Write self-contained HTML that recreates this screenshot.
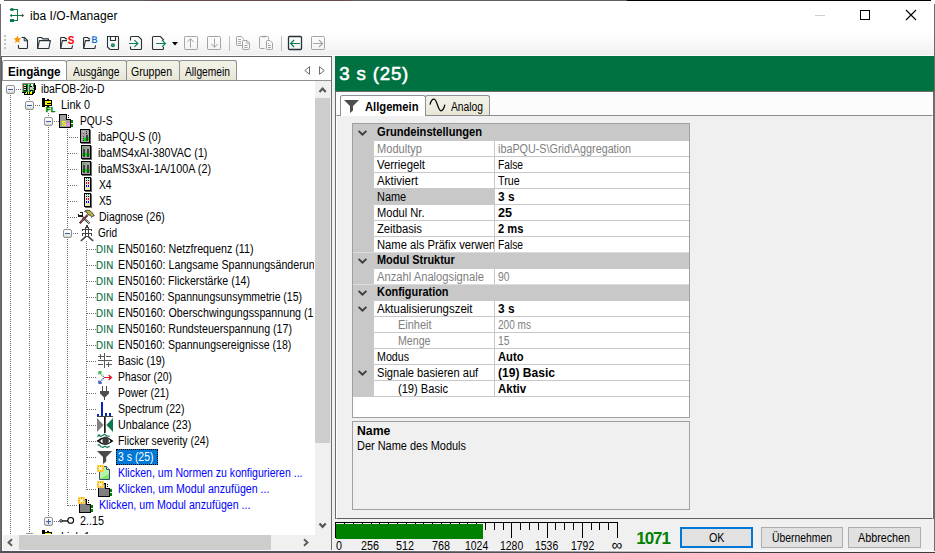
<!DOCTYPE html>
<html lang="de"><head><meta charset="utf-8"><title>iba I/O-Manager</title>
<style>
html,body{margin:0;padding:0}
body{width:935px;height:553px;overflow:hidden;position:relative;background:#f0f0f0;font:11px/16px "Liberation Sans",sans-serif;color:#000}
div,span,svg{position:absolute;box-sizing:border-box}
svg{overflow:visible}
.t{white-space:pre}
.sx{transform-origin:0 0}
.ce{shape-rendering:crispEdges}
.din{color:#006b3f;transform:scaleX(.88);transform-origin:0 0;letter-spacing:.35px;-webkit-text-stroke:.12px #006b3f}
#titlebar{left:0;top:0;width:935px;height:31px;background:#fff}
#toolbar{left:1px;top:31px;width:933px;height:25px;background:linear-gradient(#ffffff 0%,#fafafa 38%,#efefef 100%)}
#left{left:1px;top:56px;width:331px;height:497px;background:#fff;border-top:1px solid #646464;border-right:1px solid #6f6f6f;border-left:1px solid #5e5e5e}
.vl{width:1px;background-image:linear-gradient(#6c6c6c 50%,transparent 50%);background-size:1px 2px}
.hl{height:1px;background-image:linear-gradient(90deg,#6c6c6c 50%,transparent 50%);background-size:2px 1px}
.ex{width:9px;height:9px;border:1px solid #919191;border-radius:2px;background:linear-gradient(#fff 0%,#f2f2f2 50%,#d8d8d8 100%)}
.ex i{position:absolute;left:1px;top:3px;width:5px;height:1px;background:#3f5fae;display:block}
.ex b{position:absolute;left:3px;top:1px;width:1px;height:5px;background:#3f5fae;display:block}
.tab{top:60px;height:20px;border:1px solid #8e9192;border-bottom:none;border-radius:2.5px 2.5px 0 0;background:linear-gradient(#f3f2e8 0%,#eeede0 55%,#e7e5d4 100%)}
.tabsel{top:60px;height:20px;border:1px solid #8e9192;border-bottom:none;border-radius:2.5px 2.5px 0 0;background:#fff}
.btn{top:527px;height:21px;background:#e1e1e1;border:1px solid #adadad}

</style></head>
<body>
<div id="titlebar"></div>
<div style="left:4px;top:0;width:927px;height:1px;background:linear-gradient(90deg,#5e5e5e 0,#5e5e5e 140px,#6a4a4a 150px,#6a4a4a 340px,#5e5e5e 350px,#5e5e5e 622px,#000 624px,#000 100%)"></div>
<svg style="left:9px;top:7px" width="16" height="16" viewBox="0 0 16 16"><g fill="#0b7a4b"><ellipse cx="3" cy="2.45" rx="2.05" ry="1.5"/><rect x="4.5" y="2" width="4.5" height="1"/><rect x="8" y="2" width="1" height="12"/><rect x="2" y="8" width="10.5" height="1"/><path d="M0.8 8.5L2.4 6.9L4 8.5L2.4 10.1Z"/><rect x="1" y="12" width="4" height="3"/><rect x="5" y="13" width="4" height="1"/></g><path d="M12 8.5L13.5 7L15 8.5L13.5 10Z" fill="#36423e"/></svg>
<span class="t" style="left:30px;top:8px;font-size:12px;letter-spacing:0.056px;">iba I/O-Manager</span>
<div style="left:815px;top:15px;width:10px;height:1px;background:#cfcfcf"></div>
<div style="left:860px;top:10px;width:10px;height:10px;border:1px solid #000"></div>
<svg style="left:906px;top:10px" width="10" height="10" viewBox="0 0 10 10"><path d="M0 0L10 10M10 0L0 10" stroke="#000" stroke-width="1.1" fill="none"/></svg>
<div id="toolbar"></div>
<div style="left:4px;top:35px;width:2px;height:2px;background:#c3c3c3"></div>
<div style="left:4px;top:39px;width:2px;height:2px;background:#c3c3c3"></div>
<div style="left:4px;top:43px;width:2px;height:2px;background:#c3c3c3"></div>
<div style="left:4px;top:47px;width:2px;height:2px;background:#c3c3c3"></div>
<svg style="left:13px;top:35px" width="16" height="16" viewBox="0 0 16 16"><path d="M8.5 2.5H11.5L14.5 5.5V12.5Q14.5 13.5 13.5 13.5H6.5Q5.5 13.5 5.5 12.5V10" fill="none" stroke="#263238" stroke-width="1.1"/><path d="M11.2 2.8V5.8H14.3" fill="none" stroke="#263238" stroke-width="1"/><path d="M4.4 0.6L5.5 3.1L8.2 3.4L6.2 5.2L6.8 7.9L4.4 6.5L2 7.9L2.6 5.2L0.6 3.4L3.3 3.1Z" fill="#f7960e"/></svg>
<svg style="left:36px;top:35px" width="16" height="16" viewBox="0 0 16 16"><path d="M1.6 13.5V3.2Q1.6 2.5 2.3 2.5H5.6L7 3.9H12.4V5.6" fill="none" stroke="#263238" stroke-width="1.1"/><path d="M1.7 13.5L3.4 5.6H14.4L12.8 13.5Z" fill="none" stroke="#263238" stroke-width="1.1" stroke-linejoin="round"/></svg>
<svg style="left:59px;top:35px" width="16" height="16" viewBox="0 0 16 16"><path d="M1.6 13.5V3.2Q1.6 2.5 2.3 2.5H5.6L7 3.9H8.2" fill="none" stroke="#263238" stroke-width="1.1"/><path d="M13.6 10.4L12.8 13.5H1.7L3.4 5.6H8" fill="none" stroke="#263238" stroke-width="1.1" stroke-linejoin="round"/><text transform="translate(8.8,9.1) scale(0.9,1)" font-family="Liberation Sans, sans-serif" font-weight="700" font-size="11" fill="#ff0000">S</text></svg>
<svg style="left:82px;top:35px" width="16" height="16" viewBox="0 0 16 16"><path d="M1.6 13.5V3.2Q1.6 2.5 2.3 2.5H5.6L7 3.9H8.2" fill="none" stroke="#263238" stroke-width="1.1"/><path d="M13.6 10.4L12.8 13.5H1.7L3.4 5.6H8" fill="none" stroke="#263238" stroke-width="1.1" stroke-linejoin="round"/><text transform="translate(9.5,8) scale(0.86,1)" text-rendering="geometricPrecision" font-family="Liberation Sans, sans-serif" font-weight="700" font-size="9.8" fill="#1673d6">B</text></svg>
<svg style="left:105px;top:35px" width="16" height="16" viewBox="0 0 16 16"><path d="M2.5 1.5H13Q13.5 1.5 13.5 2V14Q13.5 14.5 13 14.5H5L2.5 12Z" fill="none" stroke="#263238" stroke-width="1.1"/><path d="M5.5 1.5V5.5H10.5V1.5" fill="none" stroke="#263238" stroke-width="1.1"/><circle cx="7.9" cy="10.2" r="2" fill="#0f7f52"/><circle cx="7.9" cy="10.2" r="0.8" fill="#5fae8a"/></svg>
<svg style="left:128px;top:35px" width="16" height="16" viewBox="0 0 16 16"><path d="M2.5 5.6V2.5Q2.5 1.5 3.5 1.5H10.5L13.5 4.5V13.5Q13.5 14.5 12.5 14.5H3.5Q2.5 14.5 2.5 13.5V11.4" fill="none" stroke="#263238" stroke-width="1.1"/><path d="M1 8.5H9.6M6.4 5.1L9.8 8.5L6.4 11.9" fill="none" stroke="#0f7f52" stroke-width="1.2"/></svg>
<svg style="left:151px;top:35px" width="16" height="16" viewBox="0 0 16 16"><path d="M12.5 5.4V4.8L9.4 1.5H2.5Q1.5 1.5 1.5 2.5V13.5Q1.5 14.5 2.5 14.5H11.5Q12.5 14.5 12.5 13.5V11.8" fill="none" stroke="#263238" stroke-width="1.1"/><path d="M5.2 8.5H14.2M11 5.1L14.4 8.5L11 11.9" fill="none" stroke="#0f7f52" stroke-width="1.2"/></svg>
<svg style="left:171.6px;top:41.7px" width="6" height="3.6" viewBox="0 0 6 3.6"><path d="M0 0H6L3 3.6Z" fill="#000"/></svg>
<svg style="left:183px;top:35px" width="16" height="16" viewBox="0 0 16 16"><rect x="1.5" y="1.5" width="13" height="13" rx="0.8" fill="none" stroke="#a4a4a4" stroke-width="1"/><path d="M7.5 12.6V3.6M4.2 7.2L7.5 3.7L10.8 7.2" fill="none" stroke="#a4a4a4" stroke-width="1"/></svg>
<svg style="left:206px;top:35px" width="16" height="16" viewBox="0 0 16 16"><rect x="1.5" y="1.5" width="13" height="13" rx="0.8" fill="none" stroke="#a4a4a4" stroke-width="1"/><path d="M8.5 3.4V12.4M5.2 8.8L8.5 12.3L11.8 8.8" fill="none" stroke="#a4a4a4" stroke-width="1"/></svg>
<div style="left:229px;top:36px;width:1px;height:15px;background:#bdbdbd"></div>
<svg style="left:235px;top:35px" width="16" height="16" viewBox="0 0 16 16"><path d="M7 10.5H2.2Q1.5 10.5 1.5 9.8V2.2Q1.5 1.5 2.2 1.5H6.4L8.5 3.6V4.6" fill="none" stroke="#a4a4a4" stroke-width="1"/><path d="M7.5 6.2Q7.5 5.5 8.2 5.5H12L14.5 8V13.8Q14.5 14.5 13.8 14.5H8.2Q7.5 14.5 7.5 13.8Z" fill="none" stroke="#a4a4a4" stroke-width="1"/><path d="M11.8 5.8V8.2H14.2" fill="none" stroke="#a4a4a4" stroke-width="0.9"/><path d="M3.2 4.5H6M3.2 6.5H6M3.2 8.5H6M9.4 10.5H12.6M9.4 12.5H12.6" stroke="#a4a4a4" stroke-width="1" fill="none"/></svg>
<svg style="left:258px;top:35px" width="16" height="16" viewBox="0 0 16 16"><path d="M6.6 13.5H2.5Q1.5 13.5 1.5 12.5V2.5Q1.5 1.5 2.5 1.5H9.5Q10.5 1.5 10.5 2.5V4.6" fill="none" stroke="#a4a4a4" stroke-width="1"/><path d="M4.4 1.6H7.8" stroke="#a4a4a4" stroke-width="1.6"/><path d="M8.5 6.2Q8.5 5.5 9.2 5.5H12L14.5 8V13.8Q14.5 14.5 13.8 14.5H9.2Q8.5 14.5 8.5 13.8Z" fill="none" stroke="#a4a4a4" stroke-width="1"/><path d="M10 8.5H11.2M10 10.5H13M10 12.5H13" stroke="#a4a4a4" stroke-width="1"/></svg>
<div style="left:281px;top:36px;width:1px;height:15px;background:#bdbdbd"></div>
<svg style="left:287px;top:35px" width="16" height="16" viewBox="0 0 16 16"><rect x="1.5" y="1.5" width="13" height="13" rx="1" fill="none" stroke="#263238" stroke-width="1.3"/><path d="M12.9 8.5H3.8M7.1 5L3.6 8.5L7.1 12" fill="none" stroke="#0f7f52" stroke-width="1.2"/></svg>
<svg style="left:310px;top:35px" width="16" height="16" viewBox="0 0 16 16"><rect x="1.5" y="1.5" width="13" height="13" rx="0.8" fill="none" stroke="#a4a4a4" stroke-width="1"/><path d="M3.2 8.5H12.4M9 5L12.6 8.5L9 12" fill="none" stroke="#a4a4a4" stroke-width="1.1"/></svg>
<div style="left:0;top:4px;width:1px;height:549px;background:#6e6e6e"></div>
<div id="left"></div>
<div style="left:2px;top:80px;width:329px;height:1px;background:#8e9192"></div>
<div class="tab" style="left:66px;width:61px"></div>
<div class="tab" style="left:126px;width:54px"></div>
<div class="tab" style="left:179px;width:58px"></div>
<div class="tabsel" style="left:2px;width:65px"></div>
<span class="t sx" style="left:7.5px;top:64px;font-size:12px;font-weight:700;transform:scaleX(0.9719);">Eingänge</span>
<span class="t sx" style="left:72.5px;top:64px;font-size:12px;transform:scaleX(0.8604);">Ausgänge</span>
<span class="t sx" style="left:131px;top:64px;font-size:12px;transform:scaleX(0.8779);">Gruppen</span>
<span class="t sx" style="left:185px;top:64px;font-size:12px;transform:scaleX(0.8538);">Allgemein</span>
<svg style="left:303.5px;top:66px" width="6" height="9" viewBox="0 0 6 9"><path d="M5.5 0.7V8.3L0.8 4.5Z" fill="none" stroke="#6d6d6d" stroke-width="1"/></svg>
<svg style="left:319px;top:66px" width="6" height="9" viewBox="0 0 6 9"><path d="M0.5 0.7V8.3L5.2 4.5Z" fill="none" stroke="#6d6d6d" stroke-width="1"/></svg>
<div style="left:315px;top:81px;width:16px;height:455px;background:#f0f0f0"></div>
<div style="left:315px;top:98px;width:15px;height:345px;background:#cdcdcd"></div>
<svg style="left:318px;top:86px" width="9" height="7" viewBox="0 0 9 7"><path d="M1.5 6L4.6 2.6L7.7 6" fill="none" stroke="#575757" stroke-width="2.2"/></svg>
<svg style="left:318px;top:522px" width="9" height="7" viewBox="0 0 9 7"><path d="M1.5 1.4L4.6 4.8L7.7 1.4" fill="none" stroke="#575757" stroke-width="2.2"/></svg>
<div style="left:3px;top:535px;width:328px;height:15px;background:#f0f0f0"></div>
<div style="left:19px;top:535px;width:252px;height:15px;background:#cdcdcd"></div>
<svg style="left:7px;top:539px" width="6" height="7" viewBox="0 0 6 7"><path d="M5 0.3L1.5 3.5L5 6.7" fill="none" stroke="#5a5a5a" stroke-width="1.9"/></svg>
<svg style="left:303px;top:539px" width="6" height="7" viewBox="0 0 6 7"><path d="M1 0.3L4.5 3.5L1 6.7" fill="none" stroke="#5a5a5a" stroke-width="1.9"/></svg>
<div id="treeclip" style="left:2px;top:81px;width:312px;height:453px;overflow:hidden"><div style="left:-2px;top:-81px;width:935px;height:553px"><div class="vl" style="left:10px;top:95px;height:441px"></div>
<div class="vl" style="left:29px;top:97px;height:439px"></div>
<div class="vl" style="left:48px;top:113px;height:404px"></div>
<div class="vl" style="left:67px;top:129px;height:377px"></div>
<div class="vl" style="left:86px;top:241px;height:249px"></div>
<div class="hl" style="left:16px;top:89px;width:5px"></div>
<div class="hl" style="left:35px;top:105px;width:5px"></div>
<div class="hl" style="left:54px;top:121px;width:5px"></div>
<div class="hl" style="left:69px;top:137px;width:9px"></div>
<div class="hl" style="left:68px;top:153px;width:9px"></div>
<div class="hl" style="left:68px;top:169px;width:9px"></div>
<div class="hl" style="left:68px;top:185px;width:9px"></div>
<div class="hl" style="left:68px;top:201px;width:9px"></div>
<div class="hl" style="left:68px;top:217px;width:9px"></div>
<div class="hl" style="left:73px;top:233px;width:5px"></div>
<div class="hl" style="left:87px;top:249px;width:9px"></div>
<div class="hl" style="left:87px;top:265px;width:9px"></div>
<div class="hl" style="left:87px;top:281px;width:9px"></div>
<div class="hl" style="left:87px;top:297px;width:9px"></div>
<div class="hl" style="left:87px;top:313px;width:9px"></div>
<div class="hl" style="left:87px;top:329px;width:9px"></div>
<div class="hl" style="left:87px;top:345px;width:9px"></div>
<div class="hl" style="left:87px;top:361px;width:9px"></div>
<div class="hl" style="left:87px;top:377px;width:9px"></div>
<div class="hl" style="left:87px;top:393px;width:9px"></div>
<div class="hl" style="left:87px;top:409px;width:9px"></div>
<div class="hl" style="left:87px;top:425px;width:9px"></div>
<div class="hl" style="left:87px;top:441px;width:9px"></div>
<div class="hl" style="left:87px;top:457px;width:9px"></div>
<div class="hl" style="left:87px;top:473px;width:9px"></div>
<div class="hl" style="left:87px;top:489px;width:9px"></div>
<div class="hl" style="left:68px;top:505px;width:9px"></div>
<div class="hl" style="left:54px;top:521px;width:5px"></div>
<div class="hl" style="left:35px;top:537px;width:5px"></div>
<div class="ex" style="left:6px;top:85px"><i></i></div>
<svg class="ce" style="left:21px;top:81px" width="16" height="16" viewBox="0 0 16 16"><rect x="1" y="2" width="13" height="1" fill="#8c8c8c"/><rect x="1" y="3" width="1" height="8" fill="#a8a8a8"/><rect x="2" y="3" width="11" height="8" fill="#0a8a14"/><rect x="13" y="2" width="1" height="10" fill="#000"/><rect x="14" y="4" width="1" height="5" fill="#000"/><rect x="1" y="11" width="13" height="1" fill="#000"/><rect x="3" y="12" width="10" height="1" fill="#000"/><rect x="3" y="13" width="9" height="1" fill="#000"/><rect x="4" y="12" width="1" height="1" fill="#e8e8e8"/><rect x="5" y="11" width="1" height="2" fill="#ffff00"/><rect x="7" y="11" width="1" height="2" fill="#ffff00"/><rect x="9" y="11" width="2" height="2" fill="#ffff00"/><rect x="2" y="4" width="1" height="1" fill="#ff0000"/><rect x="2" y="6" width="1" height="1" fill="#ff0000"/><rect x="3" y="4" width="2" height="1" fill="#e6e6e6"/><rect x="3" y="6" width="2" height="1" fill="#e6e6e6"/><rect x="3" y="8" width="2" height="1" fill="#e6e6e6"/><rect x="3" y="5" width="3" height="1" fill="#000"/><rect x="3" y="7" width="3" height="1" fill="#000"/><rect x="3" y="9" width="3" height="1" fill="#000"/><rect x="5" y="4" width="1" height="6" fill="#000"/><rect x="7" y="3" width="1" height="8" fill="#c0c0c0"/><rect x="8" y="3" width="1" height="1" fill="#00ff00"/><rect x="10" y="3" width="2" height="2" fill="#ffffff"/><rect x="9" y="5" width="4" height="4" fill="#c8c8c8"/><rect x="9" y="5" width="2" height="1" fill="#000"/><rect x="9" y="9" width="3" height="1" fill="#000"/><rect x="12" y="5" width="1" height="1" fill="#0a8a14"/><rect x="12" y="7" width="1" height="1" fill="#0a8a14"/><rect x="10" y="10" width="1" height="1" fill="#fff"/></svg>
<span class="t sx" style="left:41px;top:81px;font-size:12px;transform:scaleX(0.8656);">ibaFOB-2io-D</span>
<div class="ex" style="left:25px;top:101px"><i></i></div>
<svg style="left:40px;top:97px" width="16" height="16" viewBox="0 0 16 16"><g class="ce"><rect x="2" y="1" width="3" height="9" fill="#000"/><rect x="5" y="3" width="7" height="6" fill="#000"/><rect x="5" y="4" width="6" height="4" fill="#f5ee00"/><rect x="7" y="5.5" width="5" height="1" fill="#000"/><rect x="7" y="2" width="2" height="1" fill="#000"/><rect x="7" y="9" width="2" height="1" fill="#000"/></g><text x="5.7" y="15.1" font-family="Liberation Sans, sans-serif" font-weight="700" font-size="7" fill="#008000" stroke="#008000" stroke-width="0.5" letter-spacing="0.7">FL</text></svg>
<span class="t sx" style="left:61px;top:97px;font-size:12px;transform:scaleX(0.9054);">Link 0</span>
<div class="ex" style="left:44px;top:117px"><i></i></div>
<svg style="left:59px;top:113px" width="16" height="16" viewBox="0 0 16 16"><g class="ce"><path d="M0.5 1.5H7.5V6.5H11.5V14.5H0.5Z" fill="#a0a0a0" stroke="#000" stroke-width="1"/><rect x="12" y="7" width="2" height="3" fill="#008000"/><rect x="12" y="11" width="2" height="3" fill="#008000"/><rect x="9" y="2" width="1" height="1" fill="#000"/><rect x="9" y="4" width="1" height="1" fill="#000"/></g><g class="ce"><rect x="8" y="10" width="3" height="3" fill="#ff80ff"/></g><text x="2.2" y="13.1" font-family="Liberation Sans, sans-serif" font-weight="700" font-size="7.5" fill="#ffff00">S</text></svg>
<span class="t sx" style="left:80px;top:113px;font-size:12px;transform:scaleX(0.8549);">PQU-S</span>
<svg class="ce" style="left:78px;top:129px" width="16" height="16" viewBox="0 0 16 16"><rect x="3" y="1" width="10" height="14" fill="#6a6a6a"/><rect x="2" y="0" width="10" height="14" fill="#000"/><rect x="3" y="1" width="8" height="12" fill="#a6a6a6"/><rect x="5" y="2" width="1" height="1" fill="#d8d8d8"/><rect x="8" y="2" width="1" height="1" fill="#404040"/><rect x="5" y="4" width="1" height="1" fill="#ff0000"/><rect x="8" y="4" width="1" height="1" fill="#000"/><rect x="8" y="6" width="2" height="6" fill="#404040"/><rect x="5" y="7" width="1" height="1" fill="#404040"/><rect x="5" y="9" width="1" height="1" fill="#404040"/><rect x="5" y="10" width="3" height="2" fill="#00e000"/><rect x="6" y="9" width="2" height="1" fill="#00e000"/><rect x="7" y="8" width="1" height="1" fill="#00e000"/><rect x="10" y="8" width="1" height="3" fill="#00e000"/><rect x="5" y="11" width="1" height="1" fill="#404040"/></svg>
<span class="t sx" style="left:98px;top:129px;font-size:12px;transform:scaleX(0.8746);">ibaPQU-S (0)</span>
<svg class="ce" style="left:78px;top:145px" width="16" height="16" viewBox="0 0 16 16"><rect x="4" y="1" width="10" height="14" fill="#6a6a6a"/><rect x="3" y="0" width="10" height="14" fill="#000"/><rect x="4" y="1" width="8" height="12" fill="#a0a0a0"/><rect x="5" y="2" width="2" height="1" fill="#00e000"/><rect x="4" y="8" width="8" height="3" fill="#00e000"/><rect x="5" y="4" width="2" height="8" fill="#404040"/><rect x="9" y="4" width="2" height="8" fill="#404040"/></svg>
<span class="t sx" style="left:98px;top:145px;font-size:12px;transform:scaleX(0.8827);">ibaMS4xAI-380VAC (1)</span>
<svg class="ce" style="left:78px;top:161px" width="16" height="16" viewBox="0 0 16 16"><rect x="4" y="1" width="10" height="14" fill="#6a6a6a"/><rect x="3" y="0" width="10" height="14" fill="#000"/><rect x="4" y="1" width="8" height="12" fill="#a0a0a0"/><rect x="5" y="2" width="2" height="1" fill="#00e000"/><rect x="4" y="8" width="8" height="3" fill="#00e000"/><rect x="5" y="4" width="2" height="8" fill="#404040"/><rect x="9" y="4" width="2" height="8" fill="#404040"/></svg>
<span class="t sx" style="left:98px;top:161px;font-size:12px;transform:scaleX(0.9011);">ibaMS3xAI-1A/100A (2)</span>
<svg class="ce" style="left:78px;top:177px" width="16" height="16" viewBox="0 0 16 16"><rect x="7" y="1" width="7" height="14" fill="#6a6a6a"/><rect x="6" y="0" width="7" height="14" fill="#000"/><rect x="7" y="1" width="5" height="12" fill="#e4e4e4"/><rect x="8" y="1" width="1" height="1" fill="#008000"/><rect x="10" y="1" width="1" height="1" fill="#008000"/><rect x="8" y="3" width="1" height="1" fill="#000"/><rect x="10" y="3" width="1" height="1" fill="#000"/><rect x="8" y="5" width="1" height="2" fill="#ff0000"/><rect x="10" y="5" width="1" height="2" fill="#ff0000"/><rect x="8" y="8" width="1" height="2" fill="#0000ff"/><rect x="10" y="8" width="1" height="2" fill="#0000ff"/><rect x="8" y="11" width="1" height="1" fill="#ffff00"/><rect x="10" y="11" width="1" height="1" fill="#ffff00"/></svg>
<span class="t sx" style="left:99px;top:177px;font-size:12px;transform:scaleX(0.8579);">X4</span>
<svg class="ce" style="left:78px;top:193px" width="16" height="16" viewBox="0 0 16 16"><rect x="7" y="1" width="7" height="14" fill="#6a6a6a"/><rect x="6" y="0" width="7" height="14" fill="#000"/><rect x="7" y="1" width="5" height="12" fill="#e4e4e4"/><rect x="8" y="1" width="1" height="1" fill="#008000"/><rect x="10" y="1" width="1" height="1" fill="#008000"/><rect x="8" y="3" width="1" height="1" fill="#000"/><rect x="10" y="3" width="1" height="1" fill="#000"/><rect x="8" y="5" width="1" height="2" fill="#ff0000"/><rect x="10" y="5" width="1" height="2" fill="#ff0000"/><rect x="8" y="8" width="1" height="2" fill="#0000ff"/><rect x="10" y="8" width="1" height="2" fill="#0000ff"/><rect x="8" y="11" width="1" height="1" fill="#ffff00"/><rect x="10" y="11" width="1" height="1" fill="#ffff00"/></svg>
<span class="t sx" style="left:99px;top:193px;font-size:12px;transform:scaleX(0.8579);">X5</span>
<svg style="left:78px;top:209px" width="16" height="16" viewBox="0 0 16 16"><path d="M4.6 8.2L11.6 14.5" stroke="#2e2e2e" stroke-width="2.1" fill="none"/><path d="M4.6 8.2L11.6 14.5" stroke="#fff" stroke-width="1.1" stroke-dasharray="0.75 0.75" fill="none"/><path d="M9.6 6L1.7 14.2" stroke="#2a2a2a" stroke-width="2.1" fill="none"/><path d="M9.4 6.2L2 13.9" stroke="#e25555" stroke-width="1.1" stroke-dasharray="1.1 0.6" fill="none"/><path d="M6.5 2.5L8 1.3H11L13 2.5L14.5 4L15 5.5L16.4 6.5L15 7.2L14 8.3L13 7.5L12.5 6.3L10.5 6L9.5 4.5L8.5 3Z" fill="#bdb53e" stroke="#26263a" stroke-width="0.8" stroke-linejoin="round"/><g class="ce" fill="#1e1e1e"><rect x="2" y="3" width="3" height="1"/><rect x="4" y="3" width="1" height="4"/><rect x="0" y="6" width="5" height="2"/><rect x="0" y="5" width="1" height="2"/></g></svg>
<span class="t sx" style="left:99px;top:209px;font-size:12px;transform:scaleX(0.8716);">Diagnose (26)</span>
<div class="ex" style="left:63px;top:229px"><i></i></div>
<svg style="left:78px;top:225px" width="16" height="16" viewBox="0 0 16 16"><g class="ce"><rect x="8" y="0" width="2" height="2" fill="#404040"/><rect x="7" y="2" width="4" height="1" fill="#404040"/><rect x="7" y="2" width="1" height="10" fill="#404040"/><rect x="10" y="2" width="1" height="10" fill="#404040"/><rect x="4" y="4" width="10" height="1" fill="#404040"/><rect x="4" y="5" width="1" height="1" fill="#404040"/><rect x="13" y="5" width="1" height="1" fill="#404040"/><rect x="4" y="8" width="10" height="1" fill="#404040"/><rect x="4" y="9" width="1" height="2" fill="#404040"/><rect x="13" y="9" width="1" height="2" fill="#404040"/><rect x="7" y="11" width="4" height="1" fill="#404040"/></g><path d="M7.6 11.6L3.4 15.6H2.6M10.4 11.6L14.6 15.6H15.4" stroke="#404040" stroke-width="1.5" fill="none"/></svg>
<span class="t sx" style="left:98px;top:225px;font-size:12px;transform:scaleX(0.8380);">Grid</span>
<span class="t din" style="left:96.3px;top:241px">DIN</span>
<span class="t sx" style="left:118px;top:241px;font-size:12px;transform:scaleX(0.8922);">EN50160: Netzfrequenz (11)</span>
<span class="t din" style="left:96.3px;top:257px">DIN</span>
<span class="t sx" style="left:118px;top:257px;font-size:12px;transform:scaleX(0.8906);">EN50160: Langsame Spannungsänderungen (12)</span>
<span class="t din" style="left:96.3px;top:273px">DIN</span>
<span class="t sx" style="left:118px;top:273px;font-size:12px;transform:scaleX(0.8836);">EN50160: Flickerstärke (14)</span>
<span class="t din" style="left:96.3px;top:289px">DIN</span>
<span class="t sx" style="left:118px;top:289px;font-size:12px;transform:scaleX(0.8729);">EN50160: Spannungsunsymmetrie (15)</span>
<span class="t din" style="left:96.3px;top:305px">DIN</span>
<span class="t sx" style="left:118px;top:305px;font-size:12px;transform:scaleX(0.8907);">EN50160: Oberschwingungsspannung (16)</span>
<span class="t din" style="left:96.3px;top:321px">DIN</span>
<span class="t sx" style="left:118px;top:321px;font-size:12px;transform:scaleX(0.8871);">EN50160: Rundsteuerspannung (17)</span>
<span class="t din" style="left:96.3px;top:337px">DIN</span>
<span class="t sx" style="left:118px;top:337px;font-size:12px;transform:scaleX(0.8805);">EN50160: Spannungsereignisse (18)</span>
<svg class="ce" style="left:97px;top:353px" width="16" height="16" viewBox="0 0 16 16"><rect x="7" y="0" width="1" height="15" fill="#595959"/><rect x="1" y="7" width="14" height="1" fill="#595959"/><rect x="1" y="3" width="6" height="1" fill="#595959"/><rect x="3" y="1" width="1" height="5" fill="#595959"/><rect x="9" y="3" width="5" height="1" fill="#595959"/><rect x="1" y="11" width="5" height="1" fill="#595959"/><rect x="9" y="11" width="6" height="1" fill="#595959"/><rect x="11" y="9" width="1" height="5" fill="#595959"/></svg>
<span class="t sx" style="left:118px;top:353px;font-size:12px;transform:scaleX(0.8699);">Basic (19)</span>
<svg style="left:97px;top:369px" width="16" height="16" viewBox="0 0 16 16"><path d="M7 8.5H14.4M11.6 5.9L14.6 8.5L11.6 11.1" stroke="#e0182a" stroke-width="1.2" fill="none"/><path d="M14.9 8.5L12.2 6.6V10.4Z" fill="#e0182a"/><path d="M6.6 7.8L3.2 4.2" stroke="#1f9e34" stroke-width="1.3" stroke-dasharray="1.1 0.9" fill="none"/><path d="M2 5.6V3H4.8" stroke="#22a838" stroke-width="1.3" fill="none"/><path d="M6.6 9.2L3.2 12.8" stroke="#1c3fa8" stroke-width="1.3" stroke-dasharray="1.1 0.9" fill="none"/><path d="M2 11.4V14H4.8" stroke="#1c3fa8" stroke-width="1.3" fill="none"/></svg>
<span class="t sx" style="left:118px;top:369px;font-size:12px;transform:scaleX(0.8612);">Phasor (20)</span>
<svg style="left:97px;top:385px" width="16" height="16" viewBox="0 0 16 16"><g class="ce"><rect x="5" y="1" width="1" height="5" fill="#4d4d4d"/><rect x="9" y="1" width="1" height="5" fill="#4d4d4d"/><rect x="7" y="11" width="1" height="4" fill="#4d4d4d"/></g><path d="M3 6H12V8.4L8.4 12H6.6L3 8.4Z" fill="#4d4d4d"/></svg>
<span class="t sx" style="left:118px;top:385px;font-size:12px;transform:scaleX(0.8690);">Power (21)</span>
<svg class="ce" style="left:97px;top:401px" width="16" height="16" viewBox="0 0 16 16"><rect x="4" y="1" width="2" height="14" fill="#0a24c2"/><rect x="0" y="13" width="2" height="2" fill="#0a24c2"/><rect x="8" y="12" width="2" height="3" fill="#0a24c2"/><rect x="12" y="12" width="2" height="3" fill="#0a24c2"/><rect x="0" y="15" width="16" height="1" fill="#404040"/></svg>
<span class="t sx" style="left:118px;top:401px;font-size:12px;transform:scaleX(0.8733);">Spectrum (22)</span>
<svg style="left:97px;top:417px" width="16" height="16" viewBox="0 0 16 16"><path d="M0 1L6.6 8L0 15Z" fill="#808080"/><path d="M16 1L9.4 8L16 15Z" fill="#0b7a4b"/><rect x="7" y="0" width="1.7" height="16" fill="#1a1a1a"/></svg>
<span class="t sx" style="left:118px;top:417px;font-size:12px;transform:scaleX(0.8932);">Unbalance (23)</span>
<svg style="left:97px;top:433px" width="16" height="16" viewBox="0 0 16 16"><path d="M0.5 3.8L2 1.8L3.6 3.6L5.6 2.6L7.6 1.2L9.6 2.8L12.6 3.4" stroke="#0b7a4b" stroke-width="1.2" fill="none"/><path d="M0.5 12.2L2 11.6L4 13.8L6 14.4L8 13.2L10 14.4L12.8 13.4" stroke="#0b7a4b" stroke-width="1.2" fill="none"/><path d="M0.6 8Q8 2 15.4 8Q8 14 0.6 8Z" fill="#fff" stroke="#000" stroke-width="1.3"/><ellipse cx="8.6" cy="7.8" rx="3.4" ry="4.2" fill="#3c3c3c"/><path d="M5.2 6.4Q4.2 8 5.2 9.6M11.9 6.4Q12.9 8 11.9 9.6" stroke="#fff" stroke-width="0.9" fill="none"/><path d="M3.3 7L2.7 8L3.3 9M13.6 7L14.2 8L13.6 9" stroke="#000" stroke-width="0.9" fill="none"/></svg>
<span class="t sx" style="left:118px;top:433px;font-size:12px;transform:scaleX(0.8693);">Flicker severity (24)</span>
<svg style="left:97px;top:449px" width="16" height="16" viewBox="0 0 16 16"><path d="M0 2H15.2L9.2 8V12.4L6 15V8Z" fill="#4a4a4a"/></svg>
<div style="left:116px;top:449px;width:42px;height:16px;background:#0078d7"></div>
<div style="left:116px;top:449px;width:42px;height:16px;border:1px dotted #000"></div>
<span class="t sx" style="left:118px;top:449px;font-size:12px;color:#fff;transform:scaleX(0.8725);">3 s (25)</span>
<svg style="left:97px;top:465px" width="16" height="16" viewBox="0 0 16 16"><path d="M2.5 1.5H9.5L12.5 4.5V14.5H2.5Z" fill="#7be86a" stroke="#3c4c6c" stroke-width="1"/><path d="M3 2H9.3L12 4.8V9L3 14Z" fill="#c9f7bd" opacity="0.75"/><path d="M9.5 1.5V4.5H12.5" fill="#e8ffe0" stroke="#3c4c6c" stroke-width="1"/><g class="ce"><rect x="0" y="0" width="7" height="7" fill="#ffd54a"/><rect x="1" y="1" width="5" height="5" fill="#ffe27a"/><rect x="2" y="2" width="3" height="3" fill="#fff4c0"/><rect x="3" y="3" width="1" height="1" fill="#ffffff"/><rect x="3" y="0" width="1" height="2" fill="#f0a818"/><rect x="3" y="5" width="1" height="2" fill="#f0a818"/><rect x="0" y="3" width="2" height="1" fill="#f0a818"/><rect x="5" y="3" width="2" height="1" fill="#f0a818"/><rect x="1" y="1" width="1" height="1" fill="#f0a818"/><rect x="5" y="1" width="1" height="1" fill="#f0a818"/><rect x="1" y="5" width="1" height="1" fill="#f0a818"/><rect x="5" y="5" width="1" height="1" fill="#f0a818"/></g></svg>
<span class="t sx" style="left:118px;top:465px;font-size:12px;color:#0000ff;transform:scaleX(0.8782);">Klicken, um Normen zu konfigurieren ...</span>
<svg style="left:97px;top:481px" width="16" height="16" viewBox="0 0 16 16"><g class="ce"><path d="M1.5 2.5H8.5V7.5H12.5V15.5H1.5Z" fill="#808080" stroke="#000" stroke-width="1"/><rect x="13" y="8" width="2" height="3" fill="#008000"/><rect x="13" y="12" width="2" height="3" fill="#008000"/><rect x="10" y="3" width="1" height="1" fill="#000"/><rect x="10" y="5" width="1" height="1" fill="#000"/></g><g class="ce"><rect x="0" y="0" width="7" height="7" fill="#ffd54a"/><rect x="1" y="1" width="5" height="5" fill="#ffe27a"/><rect x="2" y="2" width="3" height="3" fill="#fff4c0"/><rect x="3" y="3" width="1" height="1" fill="#ffffff"/><rect x="3" y="0" width="1" height="2" fill="#f0a818"/><rect x="3" y="5" width="1" height="2" fill="#f0a818"/><rect x="0" y="3" width="2" height="1" fill="#f0a818"/><rect x="5" y="3" width="2" height="1" fill="#f0a818"/><rect x="1" y="1" width="1" height="1" fill="#f0a818"/><rect x="5" y="1" width="1" height="1" fill="#f0a818"/><rect x="1" y="5" width="1" height="1" fill="#f0a818"/><rect x="5" y="5" width="1" height="1" fill="#f0a818"/></g></svg>
<span class="t sx" style="left:118px;top:481px;font-size:12px;color:#0000ff;transform:scaleX(0.8872);">Klicken, um Modul anzufügen ...</span>
<svg style="left:78px;top:497px" width="16" height="16" viewBox="0 0 16 16"><g class="ce"><path d="M1.5 2.5H8.5V7.5H12.5V15.5H1.5Z" fill="#808080" stroke="#000" stroke-width="1"/><rect x="13" y="8" width="2" height="3" fill="#008000"/><rect x="13" y="12" width="2" height="3" fill="#008000"/><rect x="10" y="3" width="1" height="1" fill="#000"/><rect x="10" y="5" width="1" height="1" fill="#000"/></g><g class="ce"><rect x="0" y="0" width="7" height="7" fill="#ffd54a"/><rect x="1" y="1" width="5" height="5" fill="#ffe27a"/><rect x="2" y="2" width="3" height="3" fill="#fff4c0"/><rect x="3" y="3" width="1" height="1" fill="#ffffff"/><rect x="3" y="0" width="1" height="2" fill="#f0a818"/><rect x="3" y="5" width="1" height="2" fill="#f0a818"/><rect x="0" y="3" width="2" height="1" fill="#f0a818"/><rect x="5" y="3" width="2" height="1" fill="#f0a818"/><rect x="1" y="1" width="1" height="1" fill="#f0a818"/><rect x="5" y="1" width="1" height="1" fill="#f0a818"/><rect x="1" y="5" width="1" height="1" fill="#f0a818"/><rect x="5" y="5" width="1" height="1" fill="#f0a818"/></g></svg>
<span class="t sx" style="left:99px;top:497px;font-size:12px;color:#0000ff;transform:scaleX(0.8872);">Klicken, um Modul anzufügen ...</span>
<div class="ex" style="left:44px;top:517px"><i></i><b></b></div>
<svg style="left:59px;top:513px" width="16" height="16" viewBox="0 0 16 16"><rect x="2.6" y="7.3" width="6.6" height="1.3" fill="#000"/><circle cx="2" cy="7.9" r="1.25" fill="#fff" stroke="#000" stroke-width="0.9"/><circle cx="11.7" cy="7.4" r="2.9" fill="#fff" stroke="#000" stroke-width="1.1"/></svg>
<span class="t sx" style="left:80px;top:513px;font-size:12px;transform:scaleX(0.8988);">2..15</span>
<div class="ex" style="left:25px;top:533px"><i></i></div>
<svg style="left:40px;top:529px" width="16" height="16" viewBox="0 0 16 16"><g class="ce"><rect x="2" y="1" width="3" height="9" fill="#000"/><rect x="5" y="3" width="7" height="6" fill="#000"/><rect x="5" y="4" width="6" height="4" fill="#f5ee00"/><rect x="7" y="5.5" width="5" height="1" fill="#000"/><rect x="7" y="2" width="2" height="1" fill="#000"/><rect x="7" y="9" width="2" height="1" fill="#000"/></g><text x="5.7" y="15.1" font-family="Liberation Sans, sans-serif" font-weight="700" font-size="7" fill="#008000" stroke="#008000" stroke-width="0.5" letter-spacing="0.7">FL</text></svg>
<span class="t sx" style="left:61px;top:529px;font-size:12px;transform:scaleX(0.9054);">Link 1</span></div></div>
<div style="left:335px;top:56px;width:600px;height:35px;background:#007242"></div>
<div style="left:335px;top:91px;width:600px;height:1px;background:#6b6b6b"></div>
<div style="left:335px;top:91px;width:1px;height:428px;background:#6b6b6b"></div>
<span class="t" style="left:339.3px;top:62px;font-size:18.67px;color:#fff;line-height:24px;letter-spacing:0.821px;-webkit-text-stroke:0.55px #fff;">3 s (25)</span>
<div style="left:336px;top:92px;width:597px;height:24px;background:#fcfcfc"></div>
<div style="left:1px;top:55px;width:933px;height:1px;background:#fbfbfb"></div>
<div id="page" style="left:336px;top:115px;width:597px;height:404px;background:#f0f0f0;border:1px solid #8c8c8c;border-left-color:#fff;border-right-color:#fdfdfd;border-bottom-color:#5f5f5f"></div>
<div style="left:933px;top:91px;width:1px;height:428px;background:#6b6b6b"></div>
<div class="tab" style="left:425px;top:95px;width:65px;height:20px"></div>
<div class="tabsel" style="left:340px;top:95px;width:86px;height:21px;background:#fff"></div>
<svg style="left:344px;top:99px" width="16" height="16" viewBox="0 0 16 16"><path d="M0 1H15L9 7V11.6L6 13.9V7Z" fill="#4d4d4d"/></svg>
<span class="t sx" style="left:365px;top:99px;font-size:12px;font-weight:700;transform:scaleX(0.9327);">Allgemein</span>
<svg style="left:429px;top:98px" width="16" height="16" viewBox="0 0 16 16"><path d="M1 6.6C2 2.6 3.5 1.2 5 1.2C8 1.2 9 12.8 11.9 12.8C13.6 12.8 15 10.4 15.9 6.6" fill="none" stroke="#000" stroke-width="1.25"/></svg>
<span class="t sx" style="left:450.5px;top:99px;font-size:12px;transform:scaleX(0.8562);">Analog</span>
<div style="left:352px;top:123px;width:338px;height:295px;background:#fff;border:1px solid #a0a0a0"></div>
<div style="left:353px;top:124px;width:21px;height:273px;background:#c8c8c8"></div>
<div style="left:353px;top:124px;width:336px;height:17px;background:#c8c8c8"></div>
<svg style="left:358px;top:130px" width="9" height="6" viewBox="0 0 9 6"><path d="M0.6 0.8L4.5 4.7L8.4 0.8" fill="none" stroke="#3c3c3c" stroke-width="1.9"/></svg>
<span class="t sx" style="left:377px;top:124px;font-size:12px;font-weight:700;transform:scaleX(0.9264);">Grundeinstellungen</span>
<div style="left:374px;top:156px;width:315px;height:1px;background:#c8c8c8"></div>
<div style="left:374px;top:140px;width:120px;height:17px;overflow:hidden"><span class="t sx" style="left:3px;top:1px;font-size:12px;color:#808080;transform:scaleX(0.9240);">Modultyp</span></div>
<span class="t sx" style="left:498px;top:141px;font-size:12px;color:#808080;transform:scaleX(0.8982);">ibaPQU-S\Grid\Aggregation</span>
<div style="left:374px;top:172px;width:315px;height:1px;background:#c8c8c8"></div>
<div style="left:374px;top:156px;width:120px;height:17px;overflow:hidden"><span class="t sx" style="left:3px;top:1px;font-size:12px;transform:scaleX(0.9467);">Verriegelt</span></div>
<span class="t sx" style="left:498px;top:157px;font-size:12px;transform:scaleX(0.8520);">False</span>
<div style="left:374px;top:188px;width:315px;height:1px;background:#c8c8c8"></div>
<div style="left:374px;top:172px;width:120px;height:17px;overflow:hidden"><span class="t sx" style="left:3px;top:1px;font-size:12px;transform:scaleX(0.9605);">Aktiviert</span></div>
<span class="t sx" style="left:498px;top:173px;font-size:12px;transform:scaleX(0.8954);">True</span>
<div style="left:374px;top:204px;width:315px;height:1px;background:#c8c8c8"></div>
<div style="left:374px;top:188px;width:120px;height:17px;background:#c8c8c8"></div>
<div style="left:374px;top:188px;width:120px;height:17px;overflow:hidden"><span class="t sx" style="left:3px;top:1px;font-size:12px;transform:scaleX(0.9121);">Name</span></div>
<span class="t sx" style="left:498px;top:189px;font-size:12px;font-weight:700;transform:scaleX(0.9888);">3 s</span>
<div style="left:374px;top:220px;width:315px;height:1px;background:#c8c8c8"></div>
<div style="left:374px;top:204px;width:120px;height:17px;overflow:hidden"><span class="t sx" style="left:3px;top:1px;font-size:12px;transform:scaleX(0.9249);">Modul Nr.</span></div>
<span class="t sx" style="left:498px;top:205px;font-size:12px;font-weight:700;transform:scaleX(1.0480);">25</span>
<div style="left:374px;top:236px;width:315px;height:1px;background:#c8c8c8"></div>
<div style="left:374px;top:220px;width:120px;height:17px;overflow:hidden"><span class="t sx" style="left:3px;top:1px;font-size:12px;transform:scaleX(0.9369);">Zeitbasis</span></div>
<span class="t sx" style="left:498px;top:221px;font-size:12px;font-weight:700;transform:scaleX(0.9284);">2 ms</span>
<div style="left:374px;top:252px;width:315px;height:1px;background:#c8c8c8"></div>
<div style="left:374px;top:236px;width:120px;height:17px;overflow:hidden"><span class="t sx" style="left:3px;top:1px;font-size:12px;transform:scaleX(0.9337);">Name als Präfix verwenden</span></div>
<span class="t sx" style="left:498px;top:237px;font-size:12px;transform:scaleX(0.8520);">False</span>
<div style="left:353px;top:252px;width:336px;height:17px;background:#c8c8c8"></div>
<div style="left:353px;top:252px;width:336px;height:1px;background:#dcdcdc"></div>
<svg style="left:358px;top:258px" width="9" height="6" viewBox="0 0 9 6"><path d="M0.6 0.8L4.5 4.7L8.4 0.8" fill="none" stroke="#3c3c3c" stroke-width="1.9"/></svg>
<span class="t sx" style="left:377px;top:252px;font-size:12px;font-weight:700;transform:scaleX(0.9106);">Modul Struktur</span>
<div style="left:374px;top:284px;width:315px;height:1px;background:#c8c8c8"></div>
<div style="left:374px;top:268px;width:120px;height:17px;overflow:hidden"><span class="t sx" style="left:3px;top:1px;font-size:12px;color:#808080;transform:scaleX(0.9323);">Anzahl Analogsignale</span></div>
<span class="t sx" style="left:498px;top:269px;font-size:12px;color:#808080;transform:scaleX(0.8608);">90</span>
<div style="left:353px;top:284px;width:336px;height:17px;background:#c8c8c8"></div>
<div style="left:353px;top:284px;width:336px;height:1px;background:#dcdcdc"></div>
<svg style="left:358px;top:290px" width="9" height="6" viewBox="0 0 9 6"><path d="M0.6 0.8L4.5 4.7L8.4 0.8" fill="none" stroke="#3c3c3c" stroke-width="1.9"/></svg>
<span class="t sx" style="left:377px;top:284px;font-size:12px;font-weight:700;transform:scaleX(0.9090);">Konfiguration</span>
<div style="left:374px;top:316px;width:315px;height:1px;background:#c8c8c8"></div>
<svg style="left:358px;top:306px" width="9" height="6" viewBox="0 0 9 6"><path d="M0.6 0.8L4.5 4.7L8.4 0.8" fill="none" stroke="#3c3c3c" stroke-width="1.9"/></svg>
<div style="left:374px;top:300px;width:120px;height:17px;overflow:hidden"><span class="t sx" style="left:3px;top:1px;font-size:12px;transform:scaleX(0.9544);">Aktualisierungszeit</span></div>
<span class="t sx" style="left:498px;top:301px;font-size:12px;font-weight:700;transform:scaleX(0.9888);">3 s</span>
<div style="left:374px;top:332px;width:315px;height:1px;background:#c8c8c8"></div>
<div style="left:374px;top:316px;width:120px;height:17px;overflow:hidden"><span class="t sx" style="left:24px;top:1px;font-size:12px;color:#808080;transform:scaleX(0.9127);">Einheit</span></div>
<span class="t sx" style="left:498px;top:317px;font-size:12px;color:#808080;transform:scaleX(0.8384);">200 ms</span>
<div style="left:374px;top:348px;width:315px;height:1px;background:#c8c8c8"></div>
<div style="left:374px;top:332px;width:120px;height:17px;overflow:hidden"><span class="t sx" style="left:24px;top:1px;font-size:12px;color:#808080;transform:scaleX(0.8855);">Menge</span></div>
<span class="t sx" style="left:498px;top:333px;font-size:12px;color:#808080;transform:scaleX(0.8608);">15</span>
<div style="left:374px;top:364px;width:315px;height:1px;background:#c8c8c8"></div>
<div style="left:374px;top:348px;width:120px;height:17px;overflow:hidden"><span class="t sx" style="left:3px;top:1px;font-size:12px;transform:scaleX(0.8881);">Modus</span></div>
<span class="t sx" style="left:498px;top:349px;font-size:12px;font-weight:700;transform:scaleX(0.9331);">Auto</span>
<div style="left:374px;top:380px;width:315px;height:1px;background:#c8c8c8"></div>
<svg style="left:358px;top:370px" width="9" height="6" viewBox="0 0 9 6"><path d="M0.6 0.8L4.5 4.7L8.4 0.8" fill="none" stroke="#3c3c3c" stroke-width="1.9"/></svg>
<div style="left:374px;top:364px;width:120px;height:17px;overflow:hidden"><span class="t sx" style="left:3px;top:1px;font-size:12px;transform:scaleX(0.9249);">Signale basieren auf</span></div>
<span class="t sx" style="left:498px;top:365px;font-size:12px;font-weight:700;transform:scaleX(1.0052);">(19) Basic</span>
<div style="left:374px;top:396px;width:315px;height:1px;background:#c8c8c8"></div>
<div style="left:374px;top:380px;width:120px;height:17px;overflow:hidden"><span class="t sx" style="left:24px;top:1px;font-size:12px;transform:scaleX(0.9254);">(19) Basic</span></div>
<span class="t sx" style="left:498px;top:381px;font-size:12px;font-weight:700;transform:scaleX(0.9542);">Aktiv</span>
<div style="left:494px;top:140px;width:1px;height:112px;background:#c8c8c8"></div>
<div style="left:494px;top:268px;width:1px;height:16px;background:#c8c8c8"></div>
<div style="left:494px;top:300px;width:1px;height:96px;background:#c8c8c8"></div>
<div style="left:352px;top:421px;width:338px;height:89px;background:#f0f0f0;border:1px solid #a0a0a0"></div>
<span class="t sx" style="left:357px;top:423px;font-size:12px;font-weight:700;transform:scaleX(1.0187);">Name</span>
<span class="t sx" style="left:357px;top:438px;font-size:12px;transform:scaleX(0.9130);">Der Name des Moduls</span>
<div style="left:335px;top:522px;width:283px;height:1px;background:#000"></div>
<div style="left:335px;top:522px;width:1px;height:16px;background:#000"></div>
<div style="left:344px;top:522px;width:1px;height:8px;background:#000"></div>
<div style="left:353px;top:522px;width:1px;height:8px;background:#000"></div>
<div style="left:362px;top:522px;width:1px;height:8px;background:#000"></div>
<div style="left:371px;top:522px;width:1px;height:16px;background:#000"></div>
<div style="left:379px;top:522px;width:1px;height:8px;background:#000"></div>
<div style="left:388px;top:522px;width:1px;height:8px;background:#000"></div>
<div style="left:397px;top:522px;width:1px;height:8px;background:#000"></div>
<div style="left:406px;top:522px;width:1px;height:16px;background:#000"></div>
<div style="left:415px;top:522px;width:1px;height:8px;background:#000"></div>
<div style="left:423px;top:522px;width:1px;height:8px;background:#000"></div>
<div style="left:432px;top:522px;width:1px;height:8px;background:#000"></div>
<div style="left:441px;top:522px;width:1px;height:16px;background:#000"></div>
<div style="left:450px;top:522px;width:1px;height:8px;background:#000"></div>
<div style="left:459px;top:522px;width:1px;height:8px;background:#000"></div>
<div style="left:467px;top:522px;width:1px;height:8px;background:#000"></div>
<div style="left:476px;top:522px;width:1px;height:16px;background:#000"></div>
<div style="left:485px;top:522px;width:1px;height:8px;background:#000"></div>
<div style="left:494px;top:522px;width:1px;height:8px;background:#000"></div>
<div style="left:503px;top:522px;width:1px;height:8px;background:#000"></div>
<div style="left:511px;top:522px;width:1px;height:16px;background:#000"></div>
<div style="left:520px;top:522px;width:1px;height:8px;background:#000"></div>
<div style="left:529px;top:522px;width:1px;height:8px;background:#000"></div>
<div style="left:538px;top:522px;width:1px;height:8px;background:#000"></div>
<div style="left:547px;top:522px;width:1px;height:16px;background:#000"></div>
<div style="left:555px;top:522px;width:1px;height:8px;background:#000"></div>
<div style="left:564px;top:522px;width:1px;height:8px;background:#000"></div>
<div style="left:573px;top:522px;width:1px;height:8px;background:#000"></div>
<div style="left:582px;top:522px;width:1px;height:16px;background:#000"></div>
<div style="left:591px;top:522px;width:1px;height:8px;background:#000"></div>
<div style="left:599px;top:522px;width:1px;height:8px;background:#000"></div>
<div style="left:608px;top:522px;width:1px;height:8px;background:#000"></div>
<div style="left:617px;top:522px;width:1px;height:16px;background:#000"></div>
<div style="left:336px;top:524px;width:147px;height:15px;background:#008000"></div>
<span class="t sx" style="left:336px;top:538px;font-size:12px;transform:scaleX(0.8972);">0</span>
<span class="t sx" style="left:361px;top:538px;font-size:12px;transform:scaleX(0.8986);">256</span>
<span class="t sx" style="left:396px;top:538px;font-size:12px;transform:scaleX(0.8986);">512</span>
<span class="t sx" style="left:432px;top:538px;font-size:12px;transform:scaleX(0.8986);">768</span>
<span class="t sx" style="left:464.5px;top:538px;font-size:12px;transform:scaleX(0.8688);">1024</span>
<span class="t sx" style="left:499.5px;top:538px;font-size:12px;transform:scaleX(0.8688);">1280</span>
<span class="t sx" style="left:535px;top:538px;font-size:12px;transform:scaleX(0.8688);">1536</span>
<span class="t sx" style="left:570.5px;top:538px;font-size:12px;transform:scaleX(0.8688);">1792</span>
<span class="t" style="left:611.5px;top:537px;font-size:15px;">∞</span>
<span class="t" style="left:636.3px;top:528px;font-size:17px;font-weight:700;color:#008000;line-height:21px;letter-spacing:-1.076px;">1071</span>
<div class="btn" style="left:680px;width:73px;border:2px solid #0078d7"></div>
<div class="btn" style="left:761px;width:82px"></div>
<div class="btn" style="left:848px;width:73px"></div>
<span class="t sx" style="left:708.5px;top:530px;font-size:12px;transform:scaleX(0.8937);">OK</span>
<span class="t sx" style="left:771.5px;top:530px;font-size:12px;transform:scaleX(0.8649);">Übernehmen</span>
<span class="t sx" style="left:858px;top:530px;font-size:12px;transform:scaleX(0.8958);">Abbrechen</span>
<div style="left:934px;top:4px;width:1px;height:549px;background:#6e6e6e"></div>
<div style="left:2px;top:550px;width:932px;height:1px;background:#fafafa"></div>
<div style="left:0;top:551px;width:935px;height:1px;background:linear-gradient(90deg,#50545c 0,#50545c 350px,#8e9096 520px,#f3f3f3 760px,#f3f3f3 100%)"></div>
<div style="left:0;top:552px;width:935px;height:1px;background:linear-gradient(90deg,#50545c 0,#50545c 500px,#3c3c3c 800px,#3c3c3c 100%)"></div>
</body></html>
